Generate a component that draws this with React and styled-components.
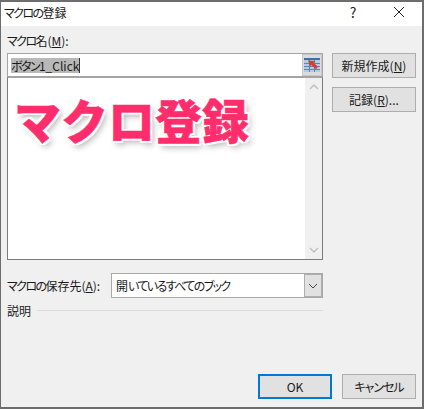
import React from "react";
import styled, { createGlobalStyle } from "styled-components";

const GlobalStyle = createGlobalStyle`
  html, body {
    margin: 0;
    padding: 0;
    background: #f0f0f0;
  }
  * {
    box-sizing: border-box;
  }
`;

const Window = styled.div`
  width: 424px;
  height: 409px;
  display: flex;
  flex-direction: column;
  background: #f0f0f0;
  border: 1px solid #6d6d6d;
  border-right-width: 2px;
  border-bottom-width: 2px;
  border-top-width: 2px;
  font-family: "Noto Sans CJK JP", "Noto Sans", sans-serif;
  font-size: 12px;
  color: #1a1a1a;
`;

const TitleBar = styled.div`
  height: 24px;
  flex: none;
  display: flex;
  align-items: center;
  padding: 0 0 4px 3px;
  background: #fff;
`;

const Title = styled.span`
  flex: 1;
`;

const TitleButton = styled.button`
  width: ${(p) => p.$w}px;
  height: 20px;
  display: flex;
  align-items: center;
  justify-content: center;
  padding: 0;
  border: 0;
  background: none;
  font: inherit;
  font-size: 14px;
  color: #222;
`;

const Body = styled.div`
  flex: 1;
  display: flex;
  flex-direction: column;
  padding: 6px 6px 8px 6px;
  min-height: 0;
`;

const TopRow = styled.div`
  display: flex;
  gap: 9px;
`;

const LeftColumn = styled.div`
  width: 316px;
  display: flex;
  flex-direction: column;
`;

const FieldLabel = styled.label`
  height: 21px;
  line-height: 17px;
`;

const Kana = styled.span`
  font-feature-settings: "palt";
  letter-spacing: ${(p) => p.$ls ?? -1.6}px;
`;

const NameField = styled.div`
  height: 24px;
  display: flex;
  align-items: stretch;
  background: #fff;
  border: 1px solid #a4a4a4;
`;

const NameText = styled.div`
  flex: 1;
  display: flex;
  align-items: center;
  padding-left: 3px;
`;

const Selected = styled.span`
  background: #b8b8b8;
  border-right: 1px solid #333;
  line-height: 15px;
`;

const RefButton = styled.div`
  width: 20px;
  display: flex;
  align-items: center;
  justify-content: center;
  background: #dcdcdc;
  border: 1px solid #c8c8c8;
`;

const MacroList = styled.div`
  position: relative;
  height: 183px;
  background: #fff;
  border: 1px solid #7c7c7c;
  border-top-color: #a4a4a4;
`;

const Banner = styled.div`
  position: absolute;
  left: 6px;
  top: 11px;
  font-size: 47px;
  font-weight: 900;
  line-height: 60px;
  white-space: nowrap;
  color: #ff2d6b;
  -webkit-text-stroke: 0.5px #ff2d6b;
  text-shadow: 2px 0 0 #fff, -2px 0 0 #fff, 0 2px 0 #fff, 0 -2px 0 #fff,
    2px 2px 0 #fff, -2px 2px 0 #fff, 2px -2px 0 #fff, -2px -2px 0 #fff,
    3px 4px 6px rgba(0, 0, 0, 0.3);
`;

const ScrollTrack = styled.div`
  position: absolute;
  top: 0;
  right: 0;
  bottom: 0;
  width: 17px;
  display: flex;
  flex-direction: column;
  justify-content: space-between;
  align-items: center;
  padding: 4px 0;
  background: #f0f0f0;
  color: #c0c0c0;
`;

const SideButtons = styled.div`
  width: 84px;
  display: flex;
  flex-direction: column;
  gap: 9px;
  padding-top: 21px;
`;

const ActionButton = styled.button`
  width: ${(p) => p.$w || 84}px;
  height: 25px;
  padding: 0;
  background: #e1e1e1;
  border: ${(p) => (p.$primary ? "2px solid #0078d7" : "1px solid #adadad")};
  font: inherit;
  color: #1a1a1a;
  line-height: 1;
  text-align: center;
`;

const SaveRow = styled.div`
  width: 316px;
  height: 25px;
  margin-top: 13px;
  display: flex;
  align-items: center;
  justify-content: space-between;
`;

const Combo = styled.div`
  width: 212px;
  height: 25px;
  display: flex;
  background: #fff;
  border: 1px solid #a9a9a9;
`;

const ComboText = styled.div`
  flex: 1;
  display: flex;
  align-items: center;
  padding-left: 4px;
`;

const ComboArrow = styled.div`
  width: 18px;
  display: flex;
  align-items: center;
  justify-content: center;
  background: #e1e1e1;
  border: 1px solid #adadad;
  color: #444;
`;

const DescriptionRow = styled.div`
  width: 316px;
  height: 20px;
  margin-top: 2px;
  display: flex;
  align-items: center;
  gap: 6px;
`;

const Rule = styled.div`
  flex: 1;
  height: 1px;
  background: #dcdcdc;
`;

const Footer = styled.div`
  margin-top: auto;
  display: flex;
  justify-content: flex-end;
  gap: 10px;
`;

const Key = styled.span`
  text-decoration: underline;
  text-underline-offset: 1px;
`;

const Chevron = ({ up, size = 10, width = 1.5 }) => (
  <svg width={size} height={size} viewBox="0 0 10 10" fill="none">
    <path
      d={up ? "M1 7l4-4 4 4" : "M1 3l4 4 4-4"}
      stroke="currentColor"
      strokeWidth={width}
    />
  </svg>
);

const RefIcon = () => (
  <svg width="16" height="14" viewBox="0 0 16 14">
    <rect width="16" height="14" fill="#b4cbe6" />
    <rect width="16" height="2" fill="#3f6ea8" />
    <path d="M0 5.5h16M0 8.5h16M0 11.5h16M5.5 2v12M10.5 2v12" stroke="#5c86ba" />
    <path d="M4 2.5l7 .5-1.5 1.8 4.5 4-2.2 2.4-4.3-4.2L6 8.5z" fill="#dc3a2c" />
  </svg>
);

const App = () => {
  return (
    <>
      <GlobalStyle />
      <Window>
        <TitleBar>
          <Title>
            <Kana>マクロの</Kana>登録
          </Title>
          <TitleButton $w={46}>?</TitleButton>
          <TitleButton $w={46}>
            <svg width="12" height="12" viewBox="0 0 12 12" fill="none">
              <path d="M1 1l10 10M11 1L1 11" stroke="#222" strokeWidth="1" />
            </svg>
          </TitleButton>
        </TitleBar>
        <Body>
          <TopRow>
            <LeftColumn>
              <FieldLabel>
                <Kana>マクロ</Kana>名(<Key>M</Key>):
              </FieldLabel>
              <NameField>
                <NameText>
                  <Selected>
                    <Kana>ボタン</Kana>1_Click
                  </Selected>
                </NameText>
                <RefButton>
                  <RefIcon />
                </RefButton>
              </NameField>
              <MacroList>
                <Banner>マクロ登録</Banner>
                <ScrollTrack>
                  <Chevron up />
                  <Chevron />
                </ScrollTrack>
              </MacroList>
            </LeftColumn>
            <SideButtons>
              <ActionButton>
                新規作成(<Key>N</Key>)
              </ActionButton>
              <ActionButton>
                記録(<Key>R</Key>)...
              </ActionButton>
            </SideButtons>
          </TopRow>
          <SaveRow>
            <span>
              <Kana>マクロの</Kana>保存先(<Key>A</Key>):
            </span>
            <Combo>
              <ComboText>
                <span>
                  開<Kana>いているすべてのブック</Kana>
                </span>
              </ComboText>
              <ComboArrow>
                <Chevron width={1} />
              </ComboArrow>
            </Combo>
          </SaveRow>
          <DescriptionRow>
            <span>説明</span>
            <Rule />
          </DescriptionRow>
          <Footer>
            <ActionButton $primary $w={74}>
              OK
            </ActionButton>
            <ActionButton $w={74}>
              <Kana $ls={-1}>キャンセル</Kana>
            </ActionButton>
          </Footer>
        </Body>
      </Window>
    </>
  );
};

export default App;
